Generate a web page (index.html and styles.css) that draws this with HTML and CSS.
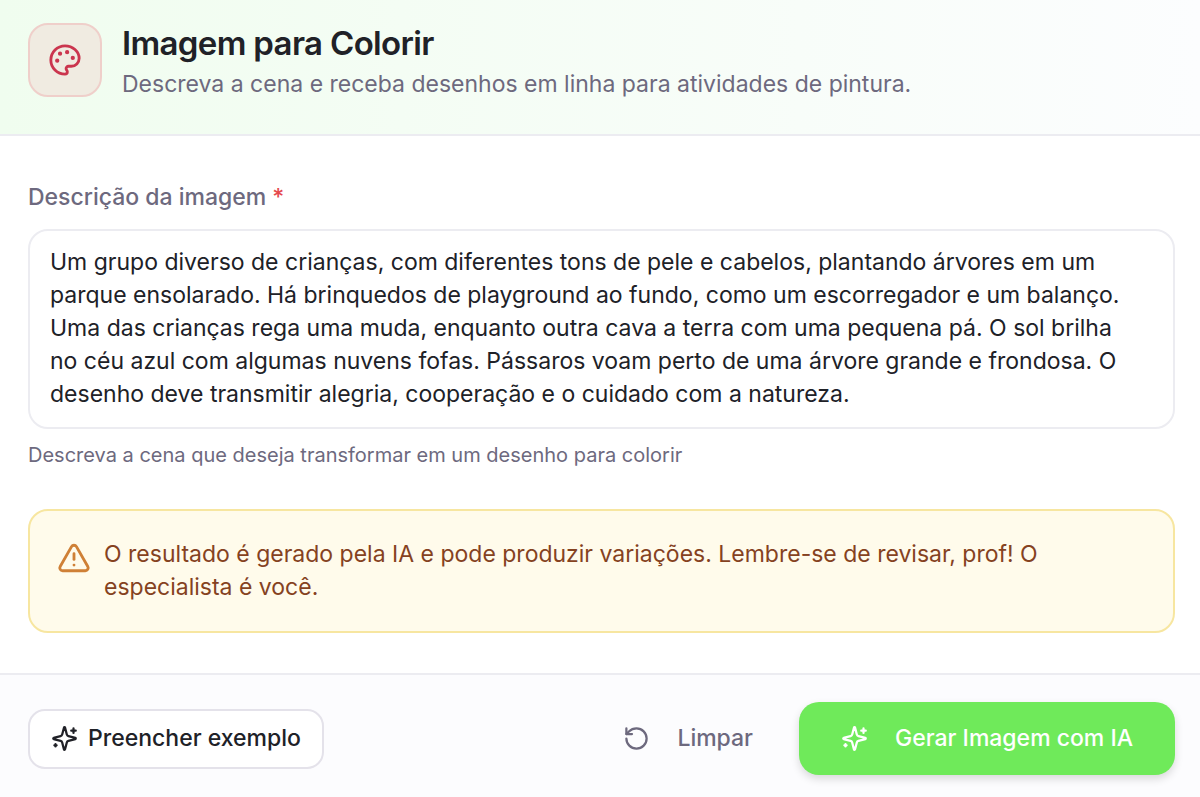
FILE: index.html
```
<!DOCTYPE html>
<html lang="pt-BR">
<head>
  <meta charset="UTF-8" />
  <meta name="viewport" content="width=device-width, initial-scale=1.0" />
  <title>Imagem para Colorir</title>
  <link rel="stylesheet" href="styles.css">
</head>
<body>
  <header class="tool-header">
    <div class="tool-icon">
      <svg class="icon icon-lg" viewBox="0 0 24 24" aria-hidden="true">
        <circle class="dot" cx="13.5" cy="6.5" r="1" />
        <circle class="dot" cx="17.5" cy="10.5" r="1" />
        <circle class="dot" cx="8.5" cy="7.5" r="1" />
        <circle class="dot" cx="6.5" cy="12.5" r="1" />
        <path d="M12 2C6.5 2 2 6.5 2 12s4.5 10 10 10c.926 0 1.648-.746 1.648-1.688 0-.437-.18-.835-.437-1.125-.29-.289-.438-.652-.438-1.125a1.64 1.64 0 0 1 1.668-1.668h1.996c3.051 0 5.555-2.503 5.555-5.554C21.965 6.012 17.461 2 12 2z" />
      </svg>
    </div>
    <div>
      <h1>Imagem para Colorir</h1>
      <p class="subtitle">Descreva a cena e receba desenhos em linha para atividades de pintura.</p>
    </div>
  </header>

  <form id="imageForm" class="tool-form">
    <main class="form-body">
      <label for="description">Descrição da imagem <span class="required">*</span></label>
      <textarea id="description" rows="5" aria-describedby="hint" spellcheck="false" required>Um grupo diverso de crianças, com diferentes tons de pele e cabelos, plantando árvores em um parque ensolarado. Há brinquedos de playground ao fundo, como um escorregador e um balanço. Uma das crianças rega uma muda, enquanto outra cava a terra com uma pequena pá. O sol brilha no céu azul com algumas nuvens fofas. Pássaros voam perto de uma árvore grande e frondosa. O desenho deve transmitir alegria, cooperação e o cuidado com a natureza.</textarea>
      <p id="hint" class="hint">Descreva a cena que deseja transformar em um desenho para colorir</p>

      <div class="notice">
        <svg class="icon icon-lg" viewBox="0 0 24 24" aria-hidden="true">
          <path d="m21.73 18-8-14a2 2 0 0 0-3.48 0l-8 14A2 2 0 0 0 4 21h16a2 2 0 0 0 1.73-3" />
          <path d="M12 9v4" />
          <path d="M12 17h.01" />
        </svg>
        <p>O resultado é gerado pela IA e pode produzir variações. Lembre-se de revisar, prof! O especialista é você.</p>
      </div>
    </main>

    <footer class="actions">
      <button type="button" class="btn btn-outline">
        <svg class="icon" viewBox="0 0 24 24" aria-hidden="true">
          <path d="M9.937 15.5A2 2 0 0 0 8.5 14.063l-6.135-1.582a.5.5 0 0 1 0-.962L8.5 9.936A2 2 0 0 0 9.937 8.5l1.582-6.135a.5.5 0 0 1 .963 0L14.063 8.5A2 2 0 0 0 15.5 9.937l6.135 1.581a.5.5 0 0 1 0 .964L15.5 14.063a2 2 0 0 0-1.437 1.437l-1.582 6.135a.5.5 0 0 1-.963 0z" />
          <path d="M20 3v4M22 5h-4M4 17v2M5 18H3" />
        </svg>
        Preencher exemplo
      </button>
      <div class="actions-right">
        <button type="reset" class="btn btn-ghost">
          <svg class="icon" viewBox="0 0 24 24" aria-hidden="true">
            <path d="M3 12a9 9 0 1 0 9-9 9.75 9.75 0 0 0-6.74 2.74L3 8" />
            <path d="M3 3v5h5" />
          </svg>
          Limpar
        </button>
        <button type="submit" class="btn btn-primary">
          <svg class="icon" viewBox="0 0 24 24" aria-hidden="true">
            <path d="M9.937 15.5A2 2 0 0 0 8.5 14.063l-6.135-1.582a.5.5 0 0 1 0-.962L8.5 9.936A2 2 0 0 0 9.937 8.5l1.582-6.135a.5.5 0 0 1 .963 0L14.063 8.5A2 2 0 0 0 15.5 9.937l6.135 1.581a.5.5 0 0 1 0 .964L15.5 14.063a2 2 0 0 0-1.437 1.437l-1.582 6.135a.5.5 0 0 1-.963 0z" />
            <path d="M20 3v4M22 5h-4M4 17v2M5 18H3" />
          </svg>
          Gerar Imagem com IA
        </button>
      </div>
    </footer>
  </form>
</body>
</html>
```
FILE: styles.css
```
:root {
  --text: #202127;
  --muted: #6d697e;
  --border: #ececf1;
  --surface: #fcfcfe;
  --primary: #6fea5a;
}

* {
  box-sizing: border-box;
}

body {
  margin: 0;
  min-height: 100vh;
  display: flex;
  flex-direction: column;
  font-family: Inter, "Liberation Sans", sans-serif;
  font-optical-sizing: none;
  font-size: 23px;
  line-height: 33px;
  color: var(--text);
  background: white;
}

h1,
p {
  margin: 0;
}

.icon {
  width: 27px;
  height: 27px;
  flex-shrink: 0;
  fill: none;
  stroke: currentColor;
  stroke-width: 2;
  stroke-linecap: round;
  stroke-linejoin: round;
}

.icon-lg {
  width: 34px;
  height: 34px;
}

.icon .dot {
  fill: currentColor;
  stroke-width: 1;
}

/* Header */
.tool-header {
  display: flex;
  align-items: flex-start;
  gap: 20px;
  padding: 23px 28px 33px;
  background: linear-gradient(90deg, #f0fdef 0%, #fcfdfe 100%);
  border-bottom: 2px solid var(--border);
}

.tool-icon {
  width: 74px;
  height: 74px;
  flex-shrink: 0;
  display: flex;
  align-items: center;
  justify-content: center;
  color: #cb354e;
  background: #f0ebe1;
  border: 2px solid #efcfca;
  border-radius: 20px;
}

h1 {
  font-size: 33px;
  line-height: 40px;
  font-weight: 600;
  letter-spacing: -0.02em;
}

.subtitle {
  margin-top: 5px;
  color: var(--muted);
}

/* Form */
.tool-form {
  flex: 1;
  display: flex;
  flex-direction: column;
}

.form-body {
  flex: 1;
  display: flex;
  flex-direction: column;
  padding: 45px 25px 40px 28px;
}

label {
  color: var(--muted);
  font-weight: 500;
}

.required {
  color: #e5484d;
}

textarea {
  width: 100%;
  margin-top: 15px;
  padding: 15px 30px 16px 20px;
  font: inherit;
  font-optical-sizing: none;
  color: inherit;
  background: white;
  border: 2px solid var(--border);
  border-radius: 20px;
  outline: none;
  resize: none;
  overflow: hidden;
}

.hint {
  margin-top: 12px;
  font-size: 20px;
  line-height: 28px;
  color: var(--muted);
}

.notice {
  display: flex;
  gap: 13px;
  margin-top: 40px;
  padding: 27px;
  color: #85421f;
  background: #fffbeb;
  border: 2px solid #f7e6a0;
  border-radius: 20px;
}

.notice .icon {
  margin-top: 3px;
  color: #cf8036;
}

/* Footer buttons */
.actions {
  display: flex;
  align-items: center;
  justify-content: space-between;
  padding: 27px 25px 22px 28px;
  background: var(--surface);
  border-top: 2px solid var(--border);
}

.actions-right {
  display: flex;
  align-items: center;
  gap: 6px;
}

.btn {
  display: flex;
  align-items: center;
  font: inherit;
  font-optical-sizing: none;
  font-weight: 500;
  border: none;
  cursor: pointer;
}

.btn-outline {
  gap: 10px;
  height: 60px;
  padding: 0 21px;
  color: var(--text);
  background: white;
  border: 2px solid #e4e2ea;
  border-radius: 17px;
}

.btn-ghost {
  gap: 27px;
  height: 73px;
  padding: 0 40px;
  color: var(--muted);
  background: transparent;
}

.btn-primary {
  gap: 27px;
  height: 73px;
  padding: 0 42px;
  color: white;
  background: var(--primary);
  border-radius: 20px;
  box-shadow: 0 4px 8px rgba(0, 0, 0, 0.14);
}
```
